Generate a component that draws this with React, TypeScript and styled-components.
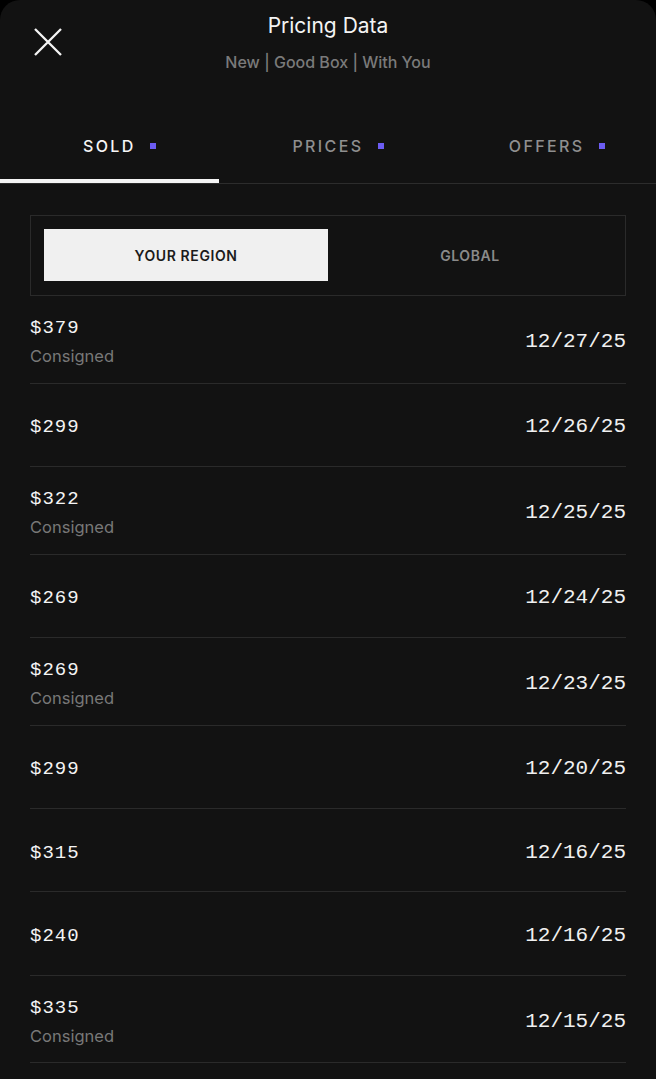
import React from "react";
import styled, { createGlobalStyle } from "styled-components";

const GlobalStyle = createGlobalStyle`
  html, body {
    margin: 0;
    padding: 0;
    background: #000000;
  }
  * { box-sizing: border-box; }
`;

const Panel = styled.div`
  height: 100vh;
  overflow: hidden;
  background: #121212;
  border-radius: 20px 20px 0 0;
  font-family: Inter, "Noto Sans", "Liberation Sans", sans-serif;
  color: #f2f2f2;
`;

const Header = styled.header`
  display: grid;
  grid-template-columns: 96px 1fr 96px;
  padding-top: 12px;
`;

const CloseButton = styled.button`
  justify-self: start;
  margin: 15px 0 0 33px;
  padding: 0;
  width: 30px;
  height: 30px;
  border: none;
  background: transparent;
  color: #f5f5f5;
  display: flex;
  align-items: center;
  justify-content: center;
`;

const TitleBlock = styled.div`
  display: flex;
  flex-direction: column;
  align-items: center;
`;

const Title = styled.h1`
  margin: 0;
  font-size: 21px;
  line-height: 28px;
  font-weight: 400;
  color: #f4f4f4;
`;

const Subtitle = styled.div`
  margin-top: 11px;
  font-size: 16px;
  line-height: 22px;
  font-weight: 500;
  color: #7a7a7a;
`;

const TabBar = styled.nav`
  margin-top: 37px;
  display: grid;
  grid-template-columns: repeat(3, 1fr);
  border-bottom: 1px solid #2c2c2c;
`;

const Tab = styled.div<{ $active?: boolean }>`
  display: flex;
  justify-content: center;
  padding: 25px 0 22px;
  border-bottom: 4px solid ${(p) => (p.$active ? "#f4f4f4" : "transparent")};
`;

const TabLabel = styled.span<{ $active?: boolean }>`
  position: relative;
  font-size: 16px;
  line-height: 22px;
  font-weight: 500;
  letter-spacing: 2.4px;
  color: ${(p) => (p.$active ? "#f6f6f6" : "#8f8f8f")};
`;

const Dot = styled.span`
  position: absolute;
  left: calc(100% + 14px);
  top: 8px;
  width: 6px;
  height: 6px;
  background: #6c5cf2;
`;

const Content = styled.main`
  padding: 31px 30px 0;
`;

const Segmented = styled.div`
  display: grid;
  grid-template-columns: 1fr 1fr;
  padding: 13px 13px 14px;
  border: 1px solid #2a2a2a;
`;

const Segment = styled.div<{ $active?: boolean }>`
  height: 52px;
  display: flex;
  align-items: center;
  justify-content: center;
  background: ${(p) => (p.$active ? "#f0f0f0" : "transparent")};
  color: ${(p) => (p.$active ? "#1b1b1b" : "#8a8a8a")};
  font-size: 14px;
  font-weight: 600;
  letter-spacing: 0.6px;
`;

const List = styled.div`
  display: flex;
  flex-direction: column;
`;

const Row = styled.div<{ $tall?: boolean }>`
  height: ${(p) => (p.$tall ? "87.6px" : "83.4px")};
  flex-shrink: 0;
  display: flex;
  align-items: center;
  justify-content: space-between;
  padding-top: 5px;
  border-bottom: 1px solid #2a2a2a;
`;

const Left = styled.div`
  display: flex;
  flex-direction: column;
`;

const Price = styled.div`
  font-family: "Liberation Mono", "DejaVu Sans Mono", monospace;
  font-size: 19px;
  line-height: 28px;
  letter-spacing: 1px;
  color: #f4f4f4;
`;

const Note = styled.div`
  font-size: 16.5px;
  line-height: 28px;
  color: #787878;
`;

const DateText = styled.div`
  font-family: "Liberation Mono", "DejaVu Sans Mono", monospace;
  font-size: 21px;
  line-height: 28px;
  color: #f0f0f0;
`;

const sales = [
  { price: "$379", consigned: true, date: "12/27/25" },
  { price: "$299", consigned: false, date: "12/26/25" },
  { price: "$322", consigned: true, date: "12/25/25" },
  { price: "$269", consigned: false, date: "12/24/25" },
  { price: "$269", consigned: true, date: "12/23/25" },
  { price: "$299", consigned: false, date: "12/20/25" },
  { price: "$315", consigned: false, date: "12/16/25" },
  { price: "$240", consigned: false, date: "12/16/25" },
  { price: "$335", consigned: true, date: "12/15/25" },
];

const tabs = [
  { label: "SOLD", active: true },
  { label: "PRICES", active: false },
  { label: "OFFERS", active: false },
];

export default function App() {
  return (
    <>
      <GlobalStyle />
      <Panel>
        <Header>
          <CloseButton aria-label="Close">
            <svg width="30" height="30" viewBox="0 0 30 30" fill="none">
              <path
                d="M2 2 L28 28 M28 2 L2 28"
                stroke="currentColor"
                strokeWidth="2.3"
                strokeLinecap="butt"
              />
            </svg>
          </CloseButton>
          <TitleBlock>
            <Title>Pricing Data</Title>
            <Subtitle>New | Good Box | With You</Subtitle>
          </TitleBlock>
          <div />
        </Header>
        <TabBar>
          {tabs.map((t) => (
            <Tab key={t.label} $active={t.active}>
              <TabLabel $active={t.active}>
                {t.label}
                <Dot />
              </TabLabel>
            </Tab>
          ))}
        </TabBar>
        <Content>
          <Segmented>
            <Segment $active>YOUR REGION</Segment>
            <Segment>GLOBAL</Segment>
          </Segmented>
          <List>
            {sales.map((s, i) => (
              <Row key={i} $tall={s.consigned}>
                <Left>
                  <Price>{s.price}</Price>
                  {s.consigned && <Note>Consigned</Note>}
                </Left>
                <DateText>{s.date}</DateText>
              </Row>
            ))}
          </List>
        </Content>
      </Panel>
    </>
  );
}
